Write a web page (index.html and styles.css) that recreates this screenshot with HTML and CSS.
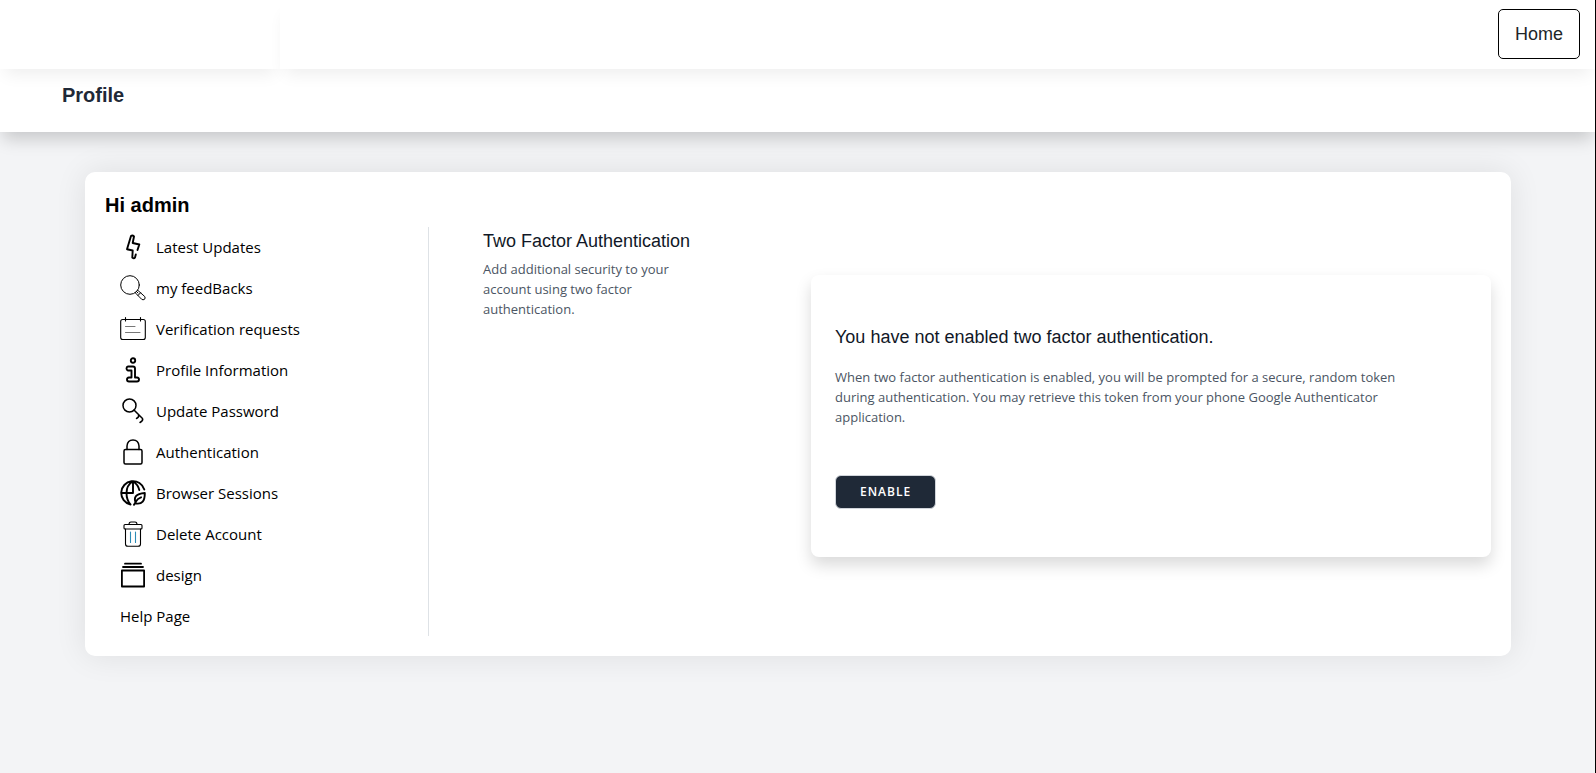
FILE: index.html
```html
<!DOCTYPE html>
<html lang="en">
<head>
<meta charset="utf-8">
<meta name="viewport" content="width=device-width, initial-scale=1">
<title>Profile</title>
<link rel="stylesheet" href="styles.css">
</head>
<body>
<div class="topbar">
  <div class="topbar-brand"></div>
  <nav class="topbar-nav"><a class="home" href="#">Home</a></nav>
</div>
<header class="page-header"><h1 class="page-title">Profile</h1></header>
<main class="card">
  <h2 class="greeting">Hi admin</h2>
  <div class="columns">
    <nav class="menu">
      <a class="item" href="#"><svg class="icon" viewBox="0 0 26 26" stroke-width="1.900"><path d="M12.700 9 14 2.500Q12.500 .8 11 2L7 15.200 12.700 16.500 12.300 23.500Q14 25 15 23.500L15.800 20.500M17.500 16 19.300 10.500 12.700 9"/></svg>Latest Updates</a>
      <a class="item" href="#"><svg class="icon" viewBox="0 0 26 26" stroke-width="1"><circle cx="10" cy="10" r="9.300"/><path d="m16.500 16.500 1.500 1.500M18 15.500 24.700 21.500Q25.700 23 24.500 24.300 23 25.300 21.700 24.300L15.500 18ZM20.500 17.800 18 20.500"/></svg>my feedBacks</a>
      <a class="item" href="#"><svg class="icon" viewBox="0 0 26 26" stroke-width="1.100"><rect x=".7" y="3.500" width="24.600" height="20" rx="2"/><path d="M5.500 1.500V5M20.500 1.500V5"/><path class="faint" d="M5.500 10.500H15M5.500 16.500H20"/></svg>Verification requests</a>
      <a class="item" href="#"><svg class="icon" viewBox="0 0 26 26" stroke-width="1.900"><circle cx="13" cy="3.500" r="2.200"/><path d="M8 9.500H13Q15 9.500 15 11.500V20.500H17Q19 20.700 19 22.500 19 24.500 17 24.500H9Q7 24.500 7 22.500 7 20.700 9 20.500H11.500V13.500H8Q6.500 13 6.500 11.500 6.500 9.800 8 9.500Z"/></svg>Profile Information</a>
      <a class="item" href="#"><svg class="icon" viewBox="0 0 26 26" stroke-width="1.500"><circle cx="9.500" cy="7.500" r="6.500"/><path d="m14 12 8.500 8.500Q23.500 22.500 20 24.500M18.500 17Q19.500 19 16.500 20.500"/></svg>Update Password</a>
      <a class="item" href="#"><svg class="icon" viewBox="0 0 26 26" stroke-width="1.500"><rect x="4" y="10.500" width="18" height="14.500" rx="1.500"/><path d="M7 10.500V7Q7.500 1 13 1T19 7V10.500"/></svg>Authentication</a>
      <a class="item" href="#"><svg class="icon" viewBox="0 0 26 26" stroke-width="1.900"><path d="M10.500 24.500A11.800 11.800 0 1 1 24.300 9.500M1.200 13H13V1.200M10.500 24.500Q6.500 20 6.500 13 6.500 5 13 1.200 18 4.500 19.300 10M14 24.800 16 21.500M16 23.500Q11.500 14 24.800 13 25 25 16 23.500M15.500 22Q17.500 18.500 21 17.300"/></svg>Browser Sessions</a>
      <a class="item" href="#"><svg class="icon" viewBox="0 0 26 26" stroke-width="1.100"><rect x="4" y="3.500" width="18" height="4.500" rx="1"/><path d="M9 3.500Q9 1 11 1H15Q17 1 17 3.500M5.500 8V23Q5.500 25.300 8 25.300H18Q20.500 25.300 20.500 23V8"/><path class="rib" d="M10.500 11V21.500M15.500 11V21.500"/></svg>Delete Account</a>
      <a class="item" href="#"><svg class="icon" viewBox="0 0 26 26" stroke-width="1.800"><path d="M5 1.700H21M3 5H23M1.900 8.500H24.100V24.500H1.900Z"/></svg>design</a>
      <a class="item" href="#">Help Page</a>
    </nav>
    <section class="content">
      <div class="intro">
        <h3 class="heading">Two Factor Authentication</h3>
        <p class="text intro-text">Add additional security to your account using two factor authentication.</p>
      </div>
      <div class="panel">
        <h3 class="heading">You have not enabled two factor authentication.</h3>
        <p class="text panel-text">When two factor authentication is enabled, you will be prompted for a secure, random token during authentication. You may retrieve this token from your phone Google Authenticator application.</p>
        <button class="enable" type="button">Enable</button>
      </div>
    </section>
  </div>
</main>
</body>
</html>
```
FILE: styles.css
```css
* { box-sizing: border-box; }
body {
  margin: 0;
  min-height: 100vh;
  background: #f3f4f6;
  border-right: 1px solid #000;
  font-family: "Open Sans", "Noto Sans", sans-serif;
  color: #000;
}
h1, h2, h3, p { margin: 0; }
a { color: inherit; text-decoration: none; }

.topbar { display: flex; position: relative; z-index: 2; }
.topbar-brand, .topbar-nav {
  background: #fff;
  box-shadow: 0 10px 16px -5px rgba(0, 0, 0, 0.07);
}
.topbar-brand { width: 280px; }
.topbar-nav {
  flex: 1;
  display: flex;
  justify-content: flex-end;
  padding: 9px 15px 10px;
}
.home {
  padding: 0 16px;
  border: 1px solid #000;
  border-radius: 5px;
  font: 18px/48px "Liberation Sans", Arial, sans-serif;
  color: #212529;
}

.page-header {
  position: relative;
  z-index: 1;
  padding: 12px 62px 23px;
  background: #fff;
  box-shadow: 0 10px 16px -3px rgba(0, 0, 0, 0.18);
}
.page-title, .greeting {
  font: bold 20px/28px "Liberation Sans", Arial, sans-serif;
}
.page-title { color: #1f2937; }

.card {
  margin: 40px 84px 40px 85px;
  padding: 19px 20px 20px;
  background: #fff;
  border-radius: 10px;
  box-shadow: 0 0 32px rgba(0, 0, 0, 0.09);
}
.greeting { margin-bottom: 8px; }
.columns { display: grid; grid-template-columns: 324fr 1062fr; }

.menu {
  display: flex;
  flex-direction: column;
  gap: 1px;
  border-right: 1px solid #dee2e6;
}
.item {
  display: flex;
  align-items: center;
  gap: 10px;
  height: 40px;
  padding-left: 15px;
  font-size: 15px;
}
.icon {
  width: 26px;
  height: 26px;
  fill: none;
  stroke: #000;
  stroke-linecap: round;
  stroke-linejoin: round;
}
.rib { stroke: #2b8ab5; }
.faint { stroke: #777; }

.content {
  display: grid;
  grid-template-columns: 328fr 680fr;
  align-items: start;
  padding-left: 54px;
}
.heading {
  font: 18px/28px "Liberation Sans", Arial, sans-serif;
  color: #111827;
}
.text { font-size: 13px; line-height: 20px; color: #4b5563; }
.intro-text { max-width: 212px; margin-top: 4px; }
.panel {
  margin-top: 48px;
  padding: 48px 24px;
  border-radius: 8px;
  background: #fff;
  box-shadow: 0 8px 16px rgba(0, 0, 0, 0.15);
}
.panel-text { max-width: 576px; margin-top: 16px; }
.enable {
  height: 34px;
  margin-top: 48px;
  padding: 0 24px;
  border: 1px solid #d1d5db;
  border-radius: 6px;
  background: #1f2937;
  color: #fff;
  font: 600 12px/16px "Open Sans", sans-serif;
  letter-spacing: 1px;
  text-transform: uppercase;
}
```
